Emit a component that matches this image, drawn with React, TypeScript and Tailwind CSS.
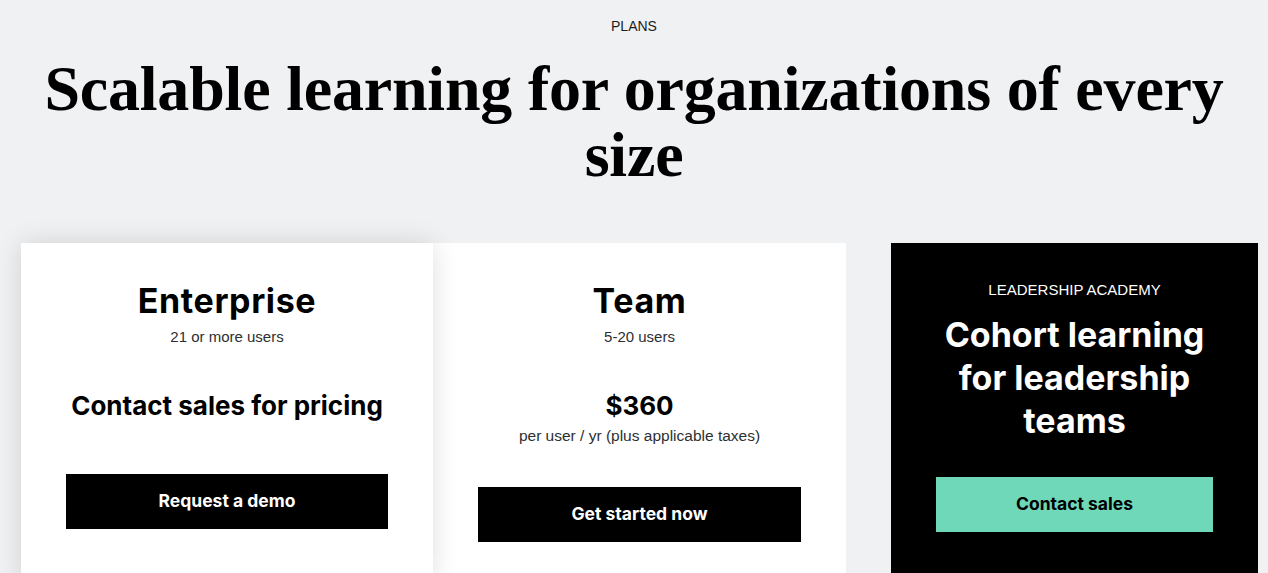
const sans = "font-['Inter',sans-serif]"
const body = "font-['Liberation_Sans',Arial,sans-serif]"

function PlanCard({
  title,
  users,
  price,
  note,
  cta,
  className,
  btnClass,
}: {
  title: string
  users: string
  price: string
  note?: string
  cta: string
  className?: string
  btnClass?: string
}) {
  return (
    <div className={`bg-white px-[45px] pt-[37px] pb-10 flex flex-col items-center ${className ?? ""}`}>
      <h3 className={`${sans} text-[34px] font-bold leading-[42px] text-black tracking-[0.6px]`}>{title}</h3>
      <p className={`${body} text-[15px] leading-[20px] text-[#2d2f31] mt-[5px]`}>{users}</p>
      <p className={`${sans} text-[26px] font-bold leading-[32px] text-black mt-[43px]`}>{price}</p>
      {note && (
        <p className={`${body} text-[15.5px] leading-[20px] text-[#2d2f31] mt-[4px]`}>{note}</p>
      )}
      <button
        className={`${sans} w-full h-[55px] bg-black text-white text-[17.5px] font-bold ${btnClass ?? ""}`}
      >
        {cta}
      </button>
    </div>
  )
}

export default function App() {
  return (
    <div className="min-h-screen bg-[#f0f1f3] overflow-hidden">
      <div className="pt-[16px] flex flex-col items-center">
        <p className={`${body} text-[14px] leading-[20px] text-[#1c1d1f]`}>PLANS</p>
        <h1 className="font-['Liberation_Serif','Times_New_Roman',serif] font-bold text-[64px] leading-[66px] text-black text-center tracking-[-0.2px] mt-[20px] max-w-[1210px]">
          Scalable learning for organizations of every size
        </h1>
      </div>

      <div className="flex items-start mt-[55px] ml-[21px]">
        <PlanCard
          title="Enterprise"
          users="21 or more users"
          price="Contact sales for pricing"
          cta="Request a demo"
          className="w-[412px] h-[340px] relative z-10 shadow-[0_0_24px_rgba(0,0,0,0.13)]"
          btnClass="mt-[52px]"
        />
        <PlanCard
          title="Team"
          users="5-20 users"
          price="$360"
          note="per user / yr (plus applicable taxes)"
          cta="Get started now"
          className="w-[413px] h-[340px]"
          btnClass="mt-[41px]"
        />

        <div className="w-[367px] h-[340px] ml-[45px] bg-black px-[45px] pt-[37px] flex flex-col items-center">
          <p className={`${body} text-[15px] leading-[20px] text-white`}>LEADERSHIP ACADEMY</p>
          <h3 className={`${sans} text-[34px] font-bold leading-[43px] text-white text-center mt-[13px]`}>
            Cohort learning for leadership teams
          </h3>
          <button className={`${sans} w-full h-[55px] mt-[35px] bg-[#6fd8b9] text-black text-[17.5px] font-bold`}>
            Contact sales
          </button>
        </div>
      </div>
    </div>
  )
}
